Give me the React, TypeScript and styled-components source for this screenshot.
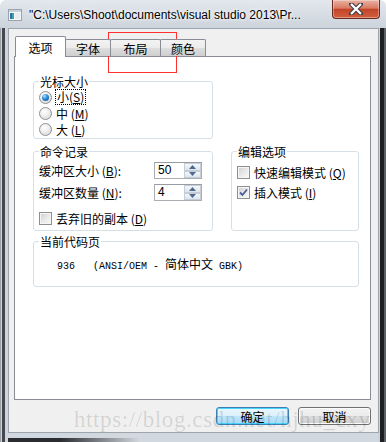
import React from 'react';
import styled, { createGlobalStyle } from 'styled-components';

const cjk = `"Noto Sans CJK SC", "Liberation Sans", sans-serif`;

const GlobalStyle = createGlobalStyle`
  html, body {
    margin: 0;
    padding: 0;
    background: #fff;
  }
  body {
    font-family: ${cjk};
    font-size: 12px;
    color: #000;
  }
  * {
    box-sizing: border-box;
  }
`;

const Window = styled.div`
  position: relative;
  width: 386px;
  height: 442px;
  overflow: hidden;
  display: flex;
  flex-direction: column;
  border-radius: 6px 6px 0 0;
  background:
    linear-gradient(
        to right,
        #9aa0a7 0 1px,
        #cdd3d9 1px 2px,
        #45494e 2px 5px,
        #cfd5db 5px 8px,
        transparent 8px 378px,
        #cdd3d9 378px 380px,
        #1d1f22 380px 384px,
        #5c6166 384px
      )
      0 28px / 100% 414px no-repeat,
    linear-gradient(to right, #2a2c30 0 60px, transparent 140px) 0 438px / 100% 4px no-repeat,
    linear-gradient(to bottom, #e3e8ee, #ccd3db 28px, #d2d8df);
`;

const TitleBar = styled.div`
  height: 28px;
  flex-shrink: 0;
  display: flex;
  align-items: flex-start;
  padding-left: 8px;
`;

const AppIcon = styled.svg`
  margin-top: 9px;
  flex-shrink: 0;
`;

const TitleText = styled.div`
  margin: 7px 0 0 7px;
  font-family: 'Liberation Sans', sans-serif;
  font-size: 12px;
  line-height: 16px;
  white-space: nowrap;
  text-shadow: 0 0 5px #fff, 0 0 3px #fff;
`;

const CloseButton = styled.div`
  margin-left: auto;
  margin-right: 6px;
  width: 48px;
  height: 19px;
  flex-shrink: 0;
  display: flex;
  align-items: center;
  justify-content: center;
  border: 1px solid #6b2b20;
  border-top: none;
  border-radius: 0 0 4px 4px;
  background: linear-gradient(to bottom, #eab3a3 0%, #da7b63 45%, #c2452b 52%, #d25f3e 100%);
  box-shadow: inset 0 0 0 1px rgba(255, 255, 255, 0.35);
`;

const Client = styled.div`
  flex: 1;
  margin: 0 7px 9px 8px;
  border: 1px solid #9ea4ab;
  background: #f0f0f0;
  padding: 7px 7px 0 5px;
  display: flex;
  flex-direction: column;
`;

const TabStrip = styled.div`
  height: 20px;
  display: flex;
  align-items: flex-end;
  padding-left: 1px;
  position: relative;
  z-index: 1;
`;

const Tab = styled.div<{ $active?: boolean; $w: number }>`
  width: ${(p) => p.$w}px;
  height: ${(p) => (p.$active ? 21 : 17)}px;
  margin-bottom: ${(p) => (p.$active ? -1 : 0)}px;
  margin-left: -1px;
  display: flex;
  align-items: center;
  justify-content: center;
  padding-top: ${(p) => (p.$active ? 0 : 1)}px;
  font-size: 12px;
  border: 1px solid #898c95;
  border-bottom: none;
  border-radius: 2px 2px 0 0;
  background: ${(p) =>
    p.$active ? '#fff' : 'linear-gradient(to bottom, #f3f3f3 0%, #ebebeb 50%, #dddddd 51%, #cfcfcf 100%)'};
  position: relative;
  z-index: ${(p) => (p.$active ? 2 : 1)};
  &:first-child {
    margin-left: 0;
  }
`;

const Panel = styled.div`
  height: 344px;
  flex-shrink: 0;
  border: 1px solid #898c95;
  background: #fff;
  padding: 17px 11px 0 18px;
`;

const GroupGrid = styled.div`
  display: grid;
  grid-template-columns: 180px 128px;
  column-gap: 18px;
  grid-template-areas:
    'cursor .'
    'history edit'
    'codepage codepage';
`;

const Group = styled.fieldset<{ $area: string; $mt?: number; $pt?: number; $pb?: number }>`
  grid-area: ${(p) => p.$area};
  margin: ${(p) => p.$mt ?? 0}px 0 0 0;
  padding: ${(p) => p.$pt ?? 0}px 4px ${(p) => p.$pb ?? 0}px 5px;
  border: 1px solid #d5dfe5;
  border-radius: 3px;
  min-width: 0;
  display: flex;
  flex-direction: column;
`;

const Legend = styled.legend`
  padding: 0 1px;
  font-size: 12px;
  line-height: 15px;
`;

const OptionRow = styled.div<{ $h?: number; $mt?: number }>`
  height: ${(p) => p.$h ?? 16}px;
  margin-top: ${(p) => p.$mt ?? 0}px;
  display: flex;
  align-items: center;
  gap: 4px;
  white-space: nowrap;
  font-size: 12px;
`;

const Radio = styled.span<{ $checked?: boolean }>`
  width: 13px;
  height: 13px;
  flex-shrink: 0;
  border-radius: 50%;
  border: 1px solid #8e8f8f;
  background: radial-gradient(circle at 40% 35%, #ffffff 0%, #f0f0f0 40%, #cfcfcf 100%);
  display: flex;
  align-items: center;
  justify-content: center;
  &::after {
    content: '';
    display: ${(p) => (p.$checked ? 'block' : 'none')};
    width: 7px;
    height: 7px;
    border-radius: 50%;
    background: radial-gradient(circle at 35% 30%, #a6e1ff 0%, #2d8ad8 45%, #0b4a86 100%);
  }
`;

const Checkbox = styled.span`
  width: 13px;
  height: 13px;
  flex-shrink: 0;
  border: 1px solid #8e8f8f;
  background: linear-gradient(135deg, #cfcfcf 0%, #ececec 60%, #fafafa 100%);
  box-shadow: inset 0 0 0 1px #f6f6f6;
  display: flex;
  align-items: center;
  justify-content: center;
`;

const Focused = styled.span`
  outline: 1px dotted #000;
  outline-offset: 0;
  padding: 0 1px;
  line-height: 14px;
`;

const FieldLabel = styled.span`
  width: 111px;
  flex-shrink: 0;
`;

const Spin = styled.div`
  width: 48px;
  height: 17px;
  border: 1px solid #abadb3;
  border-top-color: #9a9ca3;
  background: #fff;
  display: flex;
`;

const SpinValue = styled.span`
  flex: 1;
  padding-left: 3px;
  font-family: 'Liberation Sans', sans-serif;
  font-size: 12px;
  line-height: 15px;
`;

const SpinButtons = styled.div`
  width: 17px;
  display: flex;
  flex-direction: column;
`;

const SpinButton = styled.div`
  flex: 1;
  border: 1px solid #c5ced8;
  background: linear-gradient(to bottom, #f5f8fb, #dde4ec);
  display: flex;
  align-items: center;
  justify-content: center;
`;

const CodePage = styled.div`
  padding-left: 18px;
  font-family: 'Liberation Mono', monospace;
  font-size: 10px;
  line-height: 16px;
  white-space: pre;
`;

const Wide = styled.span`
  font-family: ${cjk};
  font-size: 12px;
`;

const ButtonRow = styled.div`
  margin-top: 7px;
  display: flex;
  justify-content: flex-end;
  gap: 9px;
`;

const PushButton = styled.div<{ $default?: boolean }>`
  width: 73px;
  height: 18px;
  display: flex;
  align-items: center;
  justify-content: center;
  font-size: 12px;
  border-radius: 3px;
  border: 1px solid ${(p) => (p.$default ? '#3c7fb1' : '#707070')};
  background: ${(p) =>
    p.$default
      ? 'linear-gradient(to bottom, #eaf6fd 0%, #d9f0fc 50%, #bee6fd 51%, #a7d9f5 100%)'
      : 'linear-gradient(to bottom, #f2f2f2 0%, #ebebeb 50%, #dddddd 51%, #cfcfcf 100%)'};
  box-shadow: inset 0 0 0 1px ${(p) => (p.$default ? '#48d4ff' : '#fcfcfc')};
`;

const Annotation = styled.div`
  position: absolute;
  left: 108px;
  top: 32px;
  width: 69px;
  height: 41px;
  border: 1px solid #ff3030;
  pointer-events: none;
`;

const Watermark = styled.div`
  position: absolute;
  left: 74px;
  top: 407px;
  font-family: 'Liberation Serif', serif;
  font-size: 23px;
  line-height: 26px;
  letter-spacing: 0.6px;
  color: rgba(0, 0, 0, 0.13);
  white-space: nowrap;
  pointer-events: none;
`;

const Key = ({ k }: { k: string }) => (
  <>
    (<u>{k}</u>)
  </>
);

const Tick = () => (
  <svg width="9" height="9" viewBox="0 0 9 9">
    <path d="M1 4.5 L3.5 7 L8 1.5" fill="none" stroke="#4a5f97" strokeWidth="1.8" />
  </svg>
);

const Arrow = ({ up }: { up?: boolean }) => (
  <svg width="7" height="4" viewBox="0 0 7 4">
    <path d={up ? 'M0 4 L3.5 0 L7 4 Z' : 'M0 0 L3.5 4 L7 0 Z'} fill="#4d6a8f" />
  </svg>
);

function SpinBox({ value }: { value: string }) {
  return (
    <Spin>
      <SpinValue>{value}</SpinValue>
      <SpinButtons>
        <SpinButton>
          <Arrow up />
        </SpinButton>
        <SpinButton>
          <Arrow />
        </SpinButton>
      </SpinButtons>
    </Spin>
  );
}

export default function App() {
  return (
    <>
      <GlobalStyle />
      <Window>
        <TitleBar>
          <AppIcon width="14" height="12" viewBox="0 0 14 12">
            <rect x="0.5" y="0.5" width="13" height="11" fill="#f4f6f8" stroke="#9aa3ad" />
            <rect x="1" y="1" width="12" height="2" fill="#c9d2dc" />
            <rect x="2" y="4" width="4" height="6" fill="#3ea39a" />
            <rect x="2" y="4" width="2" height="6" fill="#2a6fb8" />
            <rect x="7" y="4" width="5" height="6" fill="#e9edf1" />
          </AppIcon>
          <TitleText>"C:\Users\Shoot\documents\visual studio 2013\Pr...</TitleText>
          <CloseButton>
            <svg width="14" height="12" viewBox="0 0 14 12">
              <path
                d="M2 1 L12 11 M12 1 L2 11"
                stroke="#3a3f46"
                strokeWidth="4.4"
                strokeLinecap="square"
              />
              <path d="M2 1 L12 11 M12 1 L2 11" stroke="#fff" strokeWidth="2.4" />
            </svg>
          </CloseButton>
        </TitleBar>
        <Client>
          <TabStrip>
            <Tab $active $w={51}>选项</Tab>
            <Tab $w={46}>字体</Tab>
            <Tab $w={51}>布局</Tab>
            <Tab $w={46}>颜色</Tab>
          </TabStrip>
          <Panel>
            <GroupGrid>
              <Group $area="cursor" $pb={1}>
                <Legend>光标大小</Legend>
                <OptionRow>
                  <Radio $checked />
                  <Focused>
                    小<Key k="S" />
                  </Focused>
                </OptionRow>
                <OptionRow>
                  <Radio />
                  <span>
                    中 <Key k="M" />
                  </span>
                </OptionRow>
                <OptionRow>
                  <Radio />
                  <span>
                    大 <Key k="L" />
                  </span>
                </OptionRow>
              </Group>
              <Group $area="history" $mt={5} $pt={3} $pb={4}>
                <Legend>命令记录</Legend>
                <OptionRow $h={17}>
                  <FieldLabel>
                    缓冲区大小 <Key k="B" />:
                  </FieldLabel>
                  <SpinBox value="50" />
                </OptionRow>
                <OptionRow $h={17} $mt={5}>
                  <FieldLabel>
                    缓冲区数量 <Key k="N" />:
                  </FieldLabel>
                  <SpinBox value="4" />
                </OptionRow>
                <OptionRow $mt={9}>
                  <Checkbox />
                  <span>
                    丢弃旧的副本 <Key k="D" />
                  </span>
                </OptionRow>
              </Group>
              <Group $area="edit" $mt={5}>
                <Legend>编辑选项</Legend>
                <OptionRow $mt={5}>
                  <Checkbox />
                  <span>
                    快速编辑模式 <Key k="Q" />
                  </span>
                </OptionRow>
                <OptionRow $mt={4}>
                  <Checkbox>
                    <Tick />
                  </Checkbox>
                  <span>
                    插入模式 <Key k="I" />
                  </span>
                </OptionRow>
              </Group>
              <Group $area="codepage" $mt={3} $pt={7} $pb={11}>
                <Legend>当前代码页</Legend>
                <CodePage>
                  936   (ANSI/OEM - <Wide>简体中文</Wide> GBK)
                </CodePage>
              </Group>
            </GroupGrid>
          </Panel>
          <ButtonRow>
            <PushButton $default>确定</PushButton>
            <PushButton>取消</PushButton>
          </ButtonRow>
        </Client>
        <Annotation />
        <Watermark>https://blog.csdn.net/hjhu_cxy</Watermark>
      </Window>
    </>
  );
}
